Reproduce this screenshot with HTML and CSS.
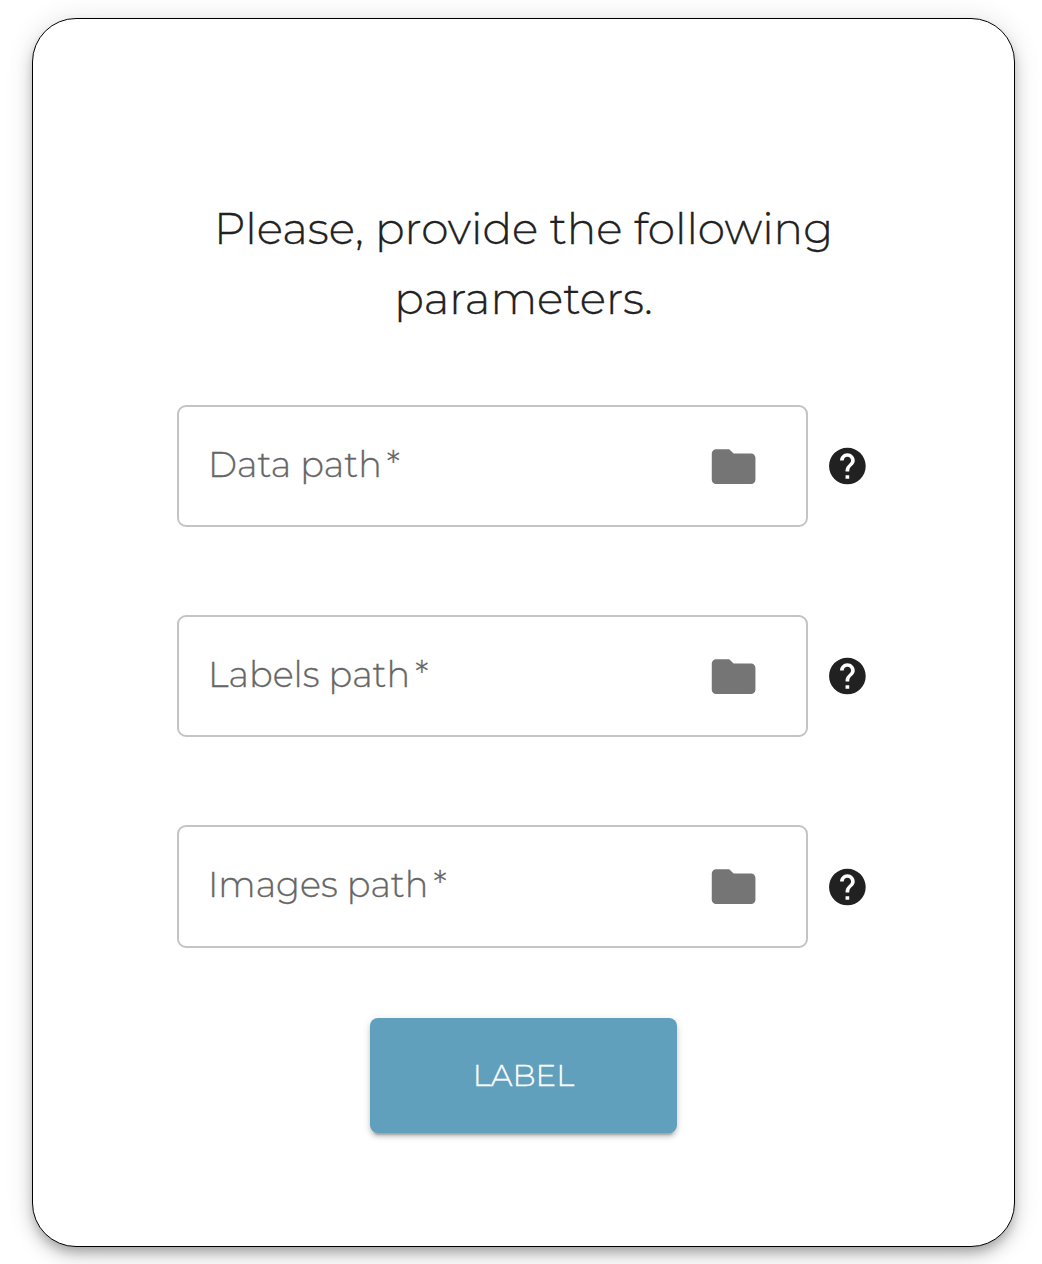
FILE: index.html
```html
<!DOCTYPE html>
<html lang="en">
<head>
<meta charset="utf-8">
<title>Parameters</title>
<link rel="stylesheet" href="styles.css">
</head>
<body>
<svg width="0" height="0" class="sprite" aria-hidden="true">
  <symbol id="folder" viewBox="0 0 24 24"><path d="M10 4H4c-1.1 0-1.99.9-1.99 2L2 18c0 1.100.9 2 2 2h16c1.100 0 2-.9 2-2V8c0-1.100-.9-2-2-2h-8l-2-2z"/></symbol>
  <symbol id="help" viewBox="0 0 24 24"><path d="M12 2C6.480 2 2 6.480 2 12s4.480 10 10 10 10-4.480 10-10S17.520 2 12 2zm1 17h-2v-2h2v2zm2.070-7.750l-.9.920C13.450 12.900 13 13.500 13 15h-2v-.5c0-1.100.450-2.100 1.170-2.830l1.240-1.260c.370-.360.590-.860.590-1.410 0-1.100-.9-2-2-2s-2 .9-2 2H8c0-2.210 1.790-4 4-4s4 1.790 4 4c0 .880-.360 1.680-.930 2.250z"/></symbol>
</svg>
<form class="card">
  <h1 class="title">Please, provide the following<br>parameters.</h1>
  <div class="fields">
    <div class="row">
      <div class="field"><span class="label">Data path</span><span class="star">*</span><svg class="folder"><use href="#folder"/></svg></div>
      <svg class="help"><use href="#help"/></svg>
    </div>
    <div class="row">
      <div class="field"><span class="label">Labels path</span><span class="star">*</span><svg class="folder"><use href="#folder"/></svg></div>
      <svg class="help"><use href="#help"/></svg>
    </div>
    <div class="row">
      <div class="field field-last"><span class="label">Images path</span><span class="star">*</span><svg class="folder"><use href="#folder"/></svg></div>
      <svg class="help"><use href="#help"/></svg>
    </div>
  </div>
  <button class="submit" type="button">LABEL</button>
</form>
</body>
</html>
```
FILE: styles.css
```css
* { box-sizing: border-box; }

body {
  margin: 0;
  padding: 18px 27px 17px 32px;
  background: #fff;
  font-family: Montserrat, Inter, sans-serif;
  font-weight: 300;
  color: #212121;
}

.sprite { display: none; }

.card {
  display: flex;
  flex-direction: column;
  height: 1229px;
  padding: 175px 144px 0;
  border: 1px solid #000;
  border-radius: 44px;
  background: #fff;
  box-shadow: 0 6px 10px -2px rgba(0, 0, 0, .2), 0 10px 16px 0 rgba(0, 0, 0, .14), 0 2px 28px 0 rgba(0, 0, 0, .12);
}

.title {
  margin: 0;
  font-size: 43.85px;
  font-weight: 300;
  line-height: 70px;
  text-align: center;
  white-space: nowrap;
  -webkit-text-stroke: 0.3px currentColor;
}

.fields {
  display: flex;
  flex-direction: column;
  gap: 88px;
  margin-top: 71px;
}

.row {
  display: flex;
  align-items: center;
  gap: 17px;
}

.field {
  display: flex;
  align-items: center;
  width: 631px;
  height: 122px;
  padding: 0 46px 0 29px;
  border: 2px solid #c4c4c4;
  border-radius: 9px;
  color: #666;
  font-size: 35.1px;
  line-height: 44px;
}

.field-last { height: 123px; }

.label,
.star {
  padding-bottom: 2px;
  -webkit-text-stroke: 0.3px currentColor;
}

.field-last .label,
.field-last .star { padding-bottom: 3px; }

.star { margin-left: 5px; }

.folder {
  width: 53.2px;
  height: 52.8px;
  margin: 0 0 0 auto;
  padding-top: 0.4px;
  fill: #757575;
}

.help {
  flex: none;
  width: 44.4px;
  height: 44px;
  padding-left: 0.4px;
  fill: #212121;
}

.submit {
  align-self: center;
  width: 307px;
  height: 115px;
  margin: 70px 0 0;
  padding: 0 0 2px;
  border: 0;
  border-radius: 8px;
  background: #60a0bd;
  color: #fff;
  font: inherit;
  font-size: 30.8px;
  -webkit-text-stroke: 0.3px currentColor;
  box-shadow: 0 6px 2px -4px rgba(0, 0, 0, .2), 0 4px 4px 0 rgba(0, 0, 0, .14), 0 2px 10px 0 rgba(0, 0, 0, .12);
}
```
